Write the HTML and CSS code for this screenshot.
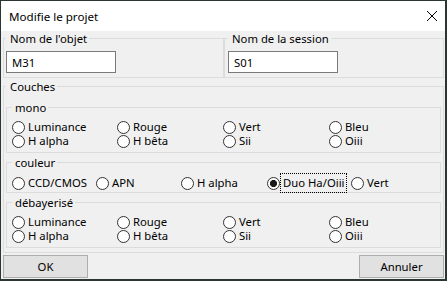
FILE: index.html
```html
<!DOCTYPE html>
<html lang="fr">
  <head>
    <meta charset="UTF-8" />
    <title>Modifie le projet</title>
    <link rel="stylesheet" href="styles.css">
  </head>
  <body>
    <div class="window">
      <div class="titlebar">
        <span>Modifie le projet</span>
        <svg class="close" width="10" height="10" viewBox="0 0 10 10">
          <path d="M0 0 L10 10 M10 0 L0 10" stroke="#000" stroke-width="1" fill="none" />
        </svg>
      </div>

      <div class="client">
        <div class="names">
          <fieldset class="group name-left">
            <legend>Nom de l'objet</legend>
            <input class="text" type="text" value="M31" />
          </fieldset>
          <fieldset class="group name-right">
            <legend>Nom de la session</legend>
            <input class="text" type="text" value="S01" />
          </fieldset>
        </div>

        <fieldset class="group couches">
          <legend>Couches</legend>

          <fieldset class="sub">
            <legend>mono</legend>
            <div class="grid4">
              <label class="radio"><input type="radio" name="layer" /><span>Luminance</span></label>
              <label class="radio"><input type="radio" name="layer" /><span>Rouge</span></label>
              <label class="radio"><input type="radio" name="layer" /><span>Vert</span></label>
              <label class="radio"><input type="radio" name="layer" /><span>Bleu</span></label>
              <label class="radio"><input type="radio" name="layer" /><span>H alpha</span></label>
              <label class="radio"><input type="radio" name="layer" /><span>H bêta</span></label>
              <label class="radio"><input type="radio" name="layer" /><span>Sii</span></label>
              <label class="radio"><input type="radio" name="layer" /><span>Oiii</span></label>
            </div>
          </fieldset>

          <fieldset class="sub couleur">
            <legend>couleur</legend>
            <div class="grid5">
              <label class="radio"><input type="radio" name="layer" /><span>CCD/CMOS</span></label>
              <label class="radio"><input type="radio" name="layer" /><span>APN</span></label>
              <label class="radio"><input type="radio" name="layer" /><span>H alpha</span></label>
              <label class="radio focus"><input type="radio" name="layer" checked /><span>Duo Ha/Oiii</span></label>
              <label class="radio"><input type="radio" name="layer" /><span>Vert</span></label>
            </div>
          </fieldset>

          <fieldset class="sub">
            <legend>débayerisé</legend>
            <div class="grid4">
              <label class="radio"><input type="radio" name="layer" /><span>Luminance</span></label>
              <label class="radio"><input type="radio" name="layer" /><span>Rouge</span></label>
              <label class="radio"><input type="radio" name="layer" /><span>Vert</span></label>
              <label class="radio"><input type="radio" name="layer" /><span>Bleu</span></label>
              <label class="radio"><input type="radio" name="layer" /><span>H alpha</span></label>
              <label class="radio"><input type="radio" name="layer" /><span>H bêta</span></label>
              <label class="radio"><input type="radio" name="layer" /><span>Sii</span></label>
              <label class="radio"><input type="radio" name="layer" /><span>Oiii</span></label>
            </div>
          </fieldset>
        </fieldset>

        <div class="buttons">
          <button type="button">OK</button>
          <button type="button">Annuler</button>
        </div>
      </div>
    </div>
  </body>
</html>
```

FILE: styles.css
```css
* {
  box-sizing: border-box;
}

body {
  margin: 0;
  background-color: #2b3531;
  font-family: "Noto Sans", "Open Sans", sans-serif;
  font-size: 11.3px;
  color: #000;
}

.window {
  margin: 1px 0 0 1px;
  width: 444px;
  height: 278px;
  background-color: #f0f0f0;
  display: flex;
  flex-direction: column;
}

.titlebar {
  height: 30px;
  flex: none;
  background-color: #fff;
  display: flex;
  align-items: center;
  justify-content: space-between;
  padding: 0 8px;
  font-size: 11.6px;
}

.client {
  flex: 1;
  padding: 0 1px 1px 2px;
  display: flex;
  flex-direction: column;
}

fieldset {
  margin: 0;
  min-width: 0;
  border: 1px solid #dcdcdc;
}

legend {
  height: 15px;
  line-height: 15px;
  padding: 0 2px 0 4px;
}

/* Name boxes */
.names {
  display: grid;
  grid-template-columns: 221px 220px;
}

.name-left {
  padding: 5px 0 4px 2px;
}

.name-right {
  padding: 5px 0 4px 3px;
}

input.text {
  display: block;
  width: 110px;
  height: 22px;
  margin: 0;
  padding: 0 0 0 5px;
  border: 1px solid #7a7a7a;
  background-color: #fff;
  font: inherit;
  outline: none;
}

/* Layers */
.couches {
  margin-top: 1px;
  padding: 6px 2px 4px 2px;
}

.sub {
  padding: 5px 0 4px 5px;
}

.sub + .sub {
  margin-top: 2px;
}

.sub legend {
  padding: 0 2px 0 3px;
}

.sub.couleur {
  padding: 6px 0 2px 5px;
}

.grid4 {
  display: grid;
  grid-template-columns: 105px 106px 106px 1fr;
  grid-auto-rows: 14px;
}

.grid5 {
  display: grid;
  grid-template-columns: 84px 85px 86px 84px 1fr;
  grid-auto-rows: 14px;
}

.radio {
  display: flex;
  align-items: center;
  gap: 3px;
  line-height: 14px;
  white-space: nowrap;
}

.radio input {
  appearance: none;
  -webkit-appearance: none;
  flex: none;
  margin: 0;
  width: 13px;
  height: 13px;
  border: 1px solid #333;
  border-radius: 50%;
  background-color: #fff;
}

.radio input:checked {
  background: radial-gradient(circle, #1a1a1a 3.2px, #fff 3.9px);
}

.radio.focus span {
  outline: 1px dotted #000;
  outline-offset: 2px;
}

/* Bottom buttons */
.buttons {
  margin-top: 2px;
  display: flex;
  justify-content: space-between;
}

.buttons button {
  width: 85px;
  height: 23px;
  padding: 0;
  background-color: #e1e1e1;
  border: 1px solid #adadad;
  font: inherit;
  color: #000;
}
```
